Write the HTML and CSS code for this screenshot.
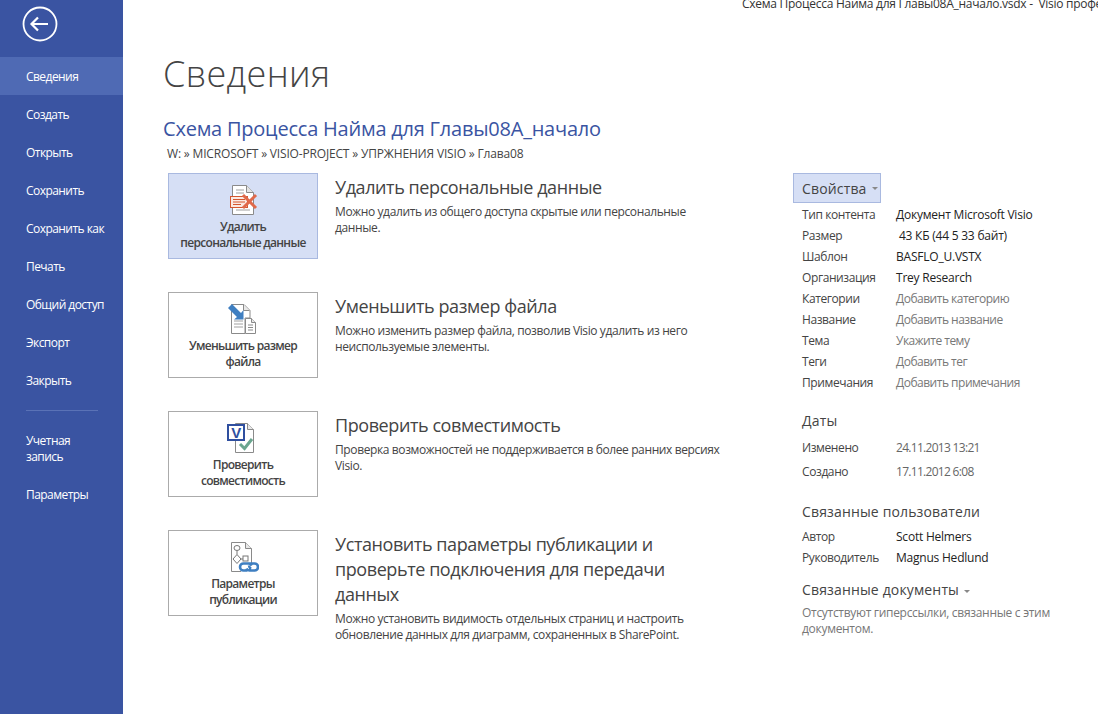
FILE: index.html
```html
<!DOCTYPE html>
<html lang="ru">
<head>
    <meta charset="utf-8">
    <title>Сведения</title>
    <link rel="stylesheet" href="styles.css">
</head>
<body>
    <div class="app">
        <nav class="sidebar">
            <div class="back">
                <svg width="36" height="36" viewBox="0 0 36 36">
                    <circle cx="18" cy="18" r="16.5" fill="none" stroke="#fff" stroke-width="1.8"/>
                    <path d="M9.500 18H26M16 11.500L9.500 18l6.500 6.500" fill="none" stroke="#fff" stroke-width="2.200"/>
                </svg>
            </div>
            <ul class="menu">
                <li class="menu-item active">Сведения</li>
                <li class="menu-item">Создать</li>
                <li class="menu-item">Открыть</li>
                <li class="menu-item">Сохранить</li>
                <li class="menu-item">Сохранить как</li>
                <li class="menu-item">Печать</li>
                <li class="menu-item">Общий доступ</li>
                <li class="menu-item">Экспорт</li>
                <li class="menu-item">Закрыть</li>
            </ul>
            <div class="menu-sep"></div>
            <ul class="menu">
                <li class="menu-item tall">Учетная<br>запись</li>
                <li class="menu-item">Параметры</li>
            </ul>
        </nav>

        <main class="main">
            <div class="window-title">Схема Процесса Найма для Главы08А_начало.vsdx -  Visio профессиональный</div>
            <h1>Сведения</h1>
            <div class="doc-title">Схема Процесса Найма для Главы08А_начало</div>
            <div class="doc-path">W: » MICROSOFT » VISIO-PROJECT » УПРЖНЕНИЯ VISIO » Глава08</div>

            <div class="columns">
                <div class="actions">
                    <section class="action">
                        <div class="tile selected">
                            <svg class="tile-icon" width="32" height="32" viewBox="0 0 32 32">
                                <path d="M5.500 1.500h14l7 7v22h-21z" fill="#fff" stroke="#8a8a8a"/>
                                <path d="M19.500 1.500v7h7" fill="#e4e4e4" stroke="#8a8a8a"/>
                                <path d="M9 6h8M9 9h8" stroke="#a0a0a0"/>
                                <rect x="3.500" y="12.500" width="17" height="11" fill="#fbe9e2" stroke="#d4572f"/>
                                <path d="M6 15.500h12M6 18h12M6 20.500h8" stroke="#d4572f"/>
                                <path d="M9 26h14" stroke="#a0a0a0"/>
                                <path d="M16 11l13 13M29 11L16 24" stroke="#e0694a" stroke-width="3"/>
                            </svg>
                            <span>Удалить<br>персональные данные</span>
                        </div>
                        <div class="action-text">
                            <h2>Удалить персональные данные</h2>
                            <p>Можно удалить из общего доступа скрытые или персональные данные.</p>
                        </div>
                    </section>

                    <section class="action">
                        <div class="tile">
                            <svg class="tile-icon" width="32" height="32" viewBox="0 0 32 32">
                                <path d="M4.500 1.500V30.500H18V15h5V7.500l-6-6z" fill="#fff" stroke="#8a8a8a"/>
                                <path d="M16.500 1.500v6h6" fill="#e8e8e8" stroke="#8a8a8a"/>
                                <path d="M7 18h9M7 21h9M7 24h9" stroke="#a0a0a0"/>
                                <path d="M18.500 15.500h6l4 4v11h-10z" fill="#fff" stroke="#8a8a8a"/>
                                <path d="M24.500 15.500v4h4" fill="#e8e8e8" stroke="#8a8a8a"/>
                                <path d="M21 22h5M21 24.500h5M21 27h5" stroke="#8a8a8a"/>
                                <path d="M3 1l9 9 2.500-3v9.500H5l3-2.500-9-9z" transform="translate(2 0)" fill="#3f7fc1"/>
                            </svg>
                            <span>Уменьшить размер<br>файла</span>
                        </div>
                        <div class="action-text">
                            <h2>Уменьшить размер файла</h2>
                            <p>Можно изменить размер файла, позволив Visio удалить из него неиспользуемые элементы.</p>
                        </div>
                    </section>

                    <section class="action">
                        <div class="tile">
                            <svg class="tile-icon" width="32" height="32" viewBox="0 0 32 32">
                                <path d="M8.500 1.500h12l6 6v23h-18z" fill="#fff" stroke="#8a8a8a"/>
                                <path d="M20.500 1.500v6h6" fill="#e8e8e8" stroke="#8a8a8a"/>
                                <rect x="1" y="3" width="16" height="15" fill="#fff" stroke="#2f4f9f" stroke-width="2"/>
                                <text x="9" y="15.500" class="visio-mark">V</text>
                                <path d="M13 22l4.500 4.500L25 17" fill="none" stroke="#6aa68f" stroke-width="3"/>
                            </svg>
                            <span>Проверить<br>совместимость</span>
                        </div>
                        <div class="action-text">
                            <h2>Проверить совместимость</h2>
                            <p>Проверка возможностей не поддерживается в более ранних версиях Visio.</p>
                        </div>
                    </section>

                    <section class="action">
                        <div class="tile">
                            <svg class="tile-icon" width="32" height="32" viewBox="0 0 32 32">
                                <path d="M4.500 30.500V1.500h14l6 6v17M4.500 30.500H14" fill="#fff" stroke="#8a8a8a"/>
                                <path d="M18.500 1.500v6h6" fill="#e8e8e8" stroke="#8a8a8a"/>
                                <ellipse cx="10" cy="7" rx="3" ry="2.500" fill="#fff" stroke="#777"/>
                                <path d="M10 9.500v4M13 18h3" stroke="#777"/>
                                <path d="M10 13.500l4 4.500-4 4.500-4-4.500z" fill="#fff" stroke="#777"/>
                                <rect x="16" y="15" width="5" height="5" fill="#fff" stroke="#777"/>
                                <path d="M20 29.500h-3.500a3.500 3.500 0 0 1 0-7h5a3.500 3.500 0 0 1 3 2M22 24.500a3.500 3.500 0 0 0 2 3h-2M21 22.500h6.500a3.500 3.500 0 0 1 0 7h-5a3.500 3.500 0 0 1-3-2" fill="none" stroke="#3f7fc1" stroke-width="2.600"/>
                            </svg>
                            <span>Параметры<br>публикации</span>
                        </div>
                        <div class="action-text">
                            <h2>Установить параметры публикации и проверьте подключения для передачи данных</h2>
                            <p>Можно установить видимость отдельных страниц и настроить обновление данных для диаграмм, сохраненных в SharePoint.</p>
                        </div>
                    </section>
                </div>

                <aside class="props">
                    <div class="props-btn">Свойства <i class="caret"></i></div>
                    <dl class="prop-list first">
                        <div class="prop"><dt>Тип контента</dt><dd>Документ Microsoft Visio</dd></div>
                        <div class="prop"><dt>Размер</dt><dd>&nbsp;43 КБ (44 5 33 байт)</dd></div>
                        <div class="prop"><dt>Шаблон</dt><dd>BASFLO_U.VSTX</dd></div>
                        <div class="prop"><dt>Организация</dt><dd>Trey Research</dd></div>
                        <div class="prop"><dt>Категории</dt><dd class="muted">Добавить категорию</dd></div>
                        <div class="prop"><dt>Название</dt><dd class="muted">Добавить название</dd></div>
                        <div class="prop"><dt>Тема</dt><dd class="muted">Укажите тему</dd></div>
                        <div class="prop"><dt>Теги</dt><dd class="muted">Добавить тег</dd></div>
                        <div class="prop"><dt>Примечания</dt><dd class="muted">Добавить примечания</dd></div>
                    </dl>

                    <h3 class="dates-title">Даты</h3>
                    <dl class="prop-list dates">
                        <div class="prop"><dt>Изменено</dt><dd class="date">24.11.2013 13:21</dd></div>
                        <div class="prop"><dt>Создано</dt><dd class="date">17.11.2012 6:08</dd></div>
                    </dl>

                    <h3 class="people-title">Связанные пользователи</h3>
                    <dl class="prop-list people">
                        <div class="prop"><dt>Автор</dt><dd>Scott Helmers</dd></div>
                        <div class="prop"><dt>Руководитель</dt><dd>Magnus Hedlund</dd></div>
                    </dl>

                    <h3 class="docs-title">Связанные документы <i class="caret"></i></h3>
                    <p class="docs-note">Отсутствуют гиперссылки, связанные с этим документом.</p>
                </aside>
            </div>
        </main>
    </div>
</body>
</html>
```

FILE: styles.css
```css
* {
    box-sizing: border-box;
}

body {
    margin: 0;
    font-family: "Open Sans", "Noto Sans", Arial, sans-serif;
    font-size: 12px;
    color: #444;
    background-color: #fff;
}

.app {
    display: flex;
    height: 714px;
    overflow: hidden;
}

.sidebar {
    flex: 0 0 123px;
    background-color: #3a54a2;
    color: #fff;
}

.back {
    height: 57px;
    padding: 6px 0 0 22px;
}

.back svg {
    display: block;
}

.menu {
    list-style-type: none;
    margin: 0;
    padding: 0;
}

.menu-item {
    display: flex;
    align-items: center;
    height: 38px;
    padding: 0 8px 0 26px;
    letter-spacing: -0.55px;
}

.menu-item.active {
    background-color: #4f6ab4;
}

.menu-item.tall {
    display: block;
    height: 53px;
    padding-top: 11px;
    line-height: 16px;
}

.menu-sep {
    width: 72px;
    height: 1px;
    margin: 11px 0 11px 26px;
    background-color: #5a72b6;
}

.main {
    flex: 1;
    min-width: 0;
    padding-left: 40px;
}

.window-title {
    height: 9px;
    margin-left: 579px;
    margin-top: -4px;
    line-height: 16px;
    white-space: pre;
    letter-spacing: -0.27px;
    color: #333;
}

h1 {
    margin: 46px 0 0;
    font-size: 36px;
    font-weight: 300;
    line-height: 46px;
    letter-spacing: 0.35px;
    color: #444;
}

.doc-title {
    margin-top: 19px;
    font-size: 20px;
    line-height: 26px;
    letter-spacing: -0.22px;
    color: #3a54a2;
}

.doc-path {
    margin: 4px 0 0 4px;
    line-height: 16px;
    letter-spacing: -0.17px;
    color: #444;
}

.columns {
    display: flex;
    margin-top: 11px;
}

.actions {
    flex: 0 0 630px;
    padding-left: 5px;
}

.action {
    display: flex;
    height: 119px;
}

.tile {
    display: flex;
    flex: 0 0 150px;
    flex-direction: column;
    align-items: center;
    height: 86px;
    padding-top: 10px;
    border: 1px solid #ababab;
    font-weight: 600;
    line-height: 16px;
    text-align: center;
    letter-spacing: -0.7px;
    color: #444;
}

.tile.selected {
    background-color: #d6dff5;
    border-color: #a9b9e0;
}

.tile-icon {
    flex: none;
    margin-bottom: 3px;
}

.visio-mark {
    font-family: "Liberation Sans", Arial, sans-serif;
    font-size: 15px;
    font-weight: 700;
    text-anchor: middle;
    fill: #2f4f9f;
}

.action-text {
    width: 385px;
    margin-left: 17px;
}

h2 {
    margin: 2px 0 0;
    font-size: 18px;
    font-weight: 400;
    line-height: 25px;
    letter-spacing: -0.42px;
    color: #444;
}

.action-text p {
    margin: 4px 0 0;
    line-height: 16px;
    letter-spacing: -0.38px;
    color: #444;
}

.props {
    flex: 1;
}

.props-btn {
    display: flex;
    align-items: center;
    gap: 1px;
    width: 88px;
    height: 30px;
    padding-left: 8px;
    background-color: #d6dff5;
    border: 1px solid #a9b9e0;
    font-size: 14px;
    letter-spacing: 0.15px;
    white-space: pre;
}

.caret {
    display: inline-block;
    width: 0;
    height: 0;
    margin-left: 1px;
    vertical-align: middle;
    border-top: 3px solid #888;
    border-left: 3px solid transparent;
    border-right: 3px solid transparent;
}

.prop-list {
    margin: 0;
    padding-left: 9px;
}

.prop-list.first {
    margin-top: 1px;
}

.prop {
    display: flex;
    height: 21px;
    line-height: 21px;
    letter-spacing: -0.4px;
}

.prop dt {
    flex: 0 0 94px;
    color: #444;
}

.prop dd {
    margin: 0;
    letter-spacing: -0.22px;
    color: #222;
}

.prop dd.muted {
    letter-spacing: -0.5px;
    color: #777;
}

.prop dd.date {
    letter-spacing: -0.7px;
    color: #666;
}

.props h3 {
    margin: 0;
    padding-left: 9px;
    font-size: 14px;
    font-weight: 400;
    line-height: 20px;
    letter-spacing: 0.15px;
    color: #444;
}

.props .dates-title {
    margin-top: 18px;
}

.dates {
    margin-top: 5px;
}

.dates .prop {
    height: 24px;
    line-height: 24px;
}

.props .people-title {
    margin-top: 18px;
}

.people {
    margin-top: 4px;
}

.props .docs-title {
    margin-top: 12px;
}

.docs-note {
    width: 270px;
    margin: 5px 0 0;
    padding-left: 9px;
    line-height: 16px;
    letter-spacing: -0.3px;
    color: #777;
}
```
